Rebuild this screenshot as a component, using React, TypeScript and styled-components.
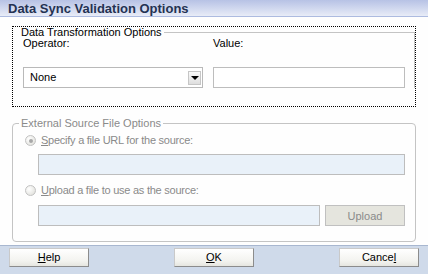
import styled, { createGlobalStyle } from "styled-components";

const GlobalStyle = createGlobalStyle`
  html, body {
    margin: 0;
    padding: 0;
    background: #ffffff;
  }
  body {
    font-family: "Liberation Sans", Tahoma, Arial, sans-serif;
    font-size: 11px;
    color: #000;
  }
`;

const Dialog = styled.div`
  width: 428px;
  height: 274px;
  display: flex;
  flex-direction: column;
  background: #fefefe;
  box-sizing: border-box;
`;

const TitleBar = styled.div`
  height: 16px;
  line-height: 17px;
  padding-left: 8px;
  border-bottom: 1px solid #adbbe0;
  background: linear-gradient(to bottom, #b7c2e5 0%, #d4dbf0 60%, #e8ecf7 100%);
  color: #243252;
  font-weight: bold;
  font-size: 13px;
  white-space: nowrap;
`;

const Body = styled.div`
  flex: 1;
  padding: 9px 12px 0 12px;
  display: flex;
  flex-direction: column;
`;

const DottedBox = styled.div`
  height: 81px;
  box-sizing: border-box;
  border: 1px dotted #000;
`;

const Group = styled.fieldset<{ $open?: boolean }>`
  margin: ${({ $open }) => ($open ? "0 0 0 6px" : "11px 0 0 0")};
  padding: ${({ $open }) => ($open ? "0" : "0 0 15px 6px")};
  border: 1px solid #c4c4c4;
  border-radius: 4px;
  min-width: 0;
  ${({ $open }) =>
    $open &&
    `
    border-left: none;
    border-bottom: none;
    border-radius: 0;
  `}
`;

const Legend = styled.legend<{ $disabled?: boolean }>`
  padding: 0 2px;
  line-height: 11px;
  color: ${({ $disabled }) => ($disabled ? "#8a8a8a" : "#000")};
`;

const FieldGrid = styled.div`
  display: grid;
  grid-template-columns: 180px 192px;
  column-gap: 10px;
  row-gap: 18px;
  margin: 0 0 0 4px;
  line-height: 11px;
`;

const FieldLabel = styled.label`
  display: block;
`;

const Select = styled.div`
  height: 21px;
  box-sizing: border-box;
  border: 1px solid #b9b9b9;
  background: #fff;
  display: flex;
  align-items: center;
  justify-content: space-between;
  padding: 0 1px 0 6px;
`;

const DropButton = styled.span`
  width: 13px;
  height: 14px;
  box-sizing: border-box;
  border: 1px solid #c6c6c6;
  background: linear-gradient(to bottom, #fafafa, #dedede);
  display: flex;
  align-items: center;
  justify-content: center;
  &::after {
    content: "";
    border-left: 4px solid transparent;
    border-right: 4px solid transparent;
    border-top: 4px solid #000;
  }
`;

const TextInput = styled.div<{ $disabled?: boolean }>`
  height: 21px;
  box-sizing: border-box;
  border: 1px solid #bdbdbd;
  background: ${({ $disabled }) => ($disabled ? "#e9f1f9" : "#fff")};
`;

const RadioRow = styled.div<{ $top: number }>`
  display: flex;
  align-items: center;
  gap: 5px;
  margin: ${({ $top }) => $top}px 0 0 6px;
  line-height: 13px;
  color: #8a8a8a;
  letter-spacing: -0.25px;
`;

const Radio = styled.span<{ $checked?: boolean }>`
  width: 9px;
  height: 9px;
  border-radius: 50%;
  border: 1px solid #c2c2c2;
  background: radial-gradient(circle at 35% 35%, #ffffff, #dcdcd6);
  display: flex;
  align-items: center;
  justify-content: center;
  &::after {
    content: "";
    display: ${({ $checked }) => ($checked ? "block" : "none")};
    width: 4px;
    height: 4px;
    border-radius: 50%;
    background: #a8a8a8;
  }
`;

const InputRow = styled.div<{ $top: number }>`
  display: flex;
  gap: 5px;
  margin: ${({ $top }) => $top}px 10px 0 19px;
  > div {
    flex: 1;
  }
`;

const UploadButton = styled.span`
  width: 80px;
  height: 21px;
  box-sizing: border-box;
  border: 1px solid #c0c0c0;
  background: #e5e5de;
  color: #8a8a8a;
  display: flex;
  align-items: center;
  justify-content: center;
`;

const Footer = styled.div`
  height: 26px;
  border-top: 1px solid #a8b7d0;
  background: #cfdaea;
  display: flex;
  align-items: flex-start;
  padding: 2px 9px 0 9px;
`;

const Button = styled.button<{ $push?: boolean }>`
  width: 80px;
  height: 19px;
  margin-left: ${({ $push }) => ($push ? "auto" : "0")};
  & + & {
    margin-left: ${({ $push }) => ($push ? "auto" : "23px")};
  }
  padding: 0;
  box-sizing: border-box;
  border: 1px solid;
  border-color: #c9c9c9 #8c8c8c #8c8c8c #c9c9c9;
  background: linear-gradient(to bottom, #ffffff, #f3f3ef 70%, #e6e6e0);
  font-family: "Liberation Sans", Tahoma, Arial, sans-serif;
  font-size: 11px;
  color: #000;
  line-height: 17px;
`;

export default function App() {
  return (
    <>
      <GlobalStyle />
      <Dialog>
        <TitleBar>Data Sync Validation Options</TitleBar>
        <Body>
          <DottedBox>
            <Group $open>
              <Legend>Data Transformation Options</Legend>
              <FieldGrid>
                <FieldLabel>Operator:</FieldLabel>
                <FieldLabel>Value:</FieldLabel>
                <Select>
                  <span>None</span>
                  <DropButton />
                </Select>
                <TextInput />
              </FieldGrid>
            </Group>
          </DottedBox>
          <Group>
            <Legend $disabled>External Source File Options</Legend>
            <RadioRow $top={5}>
              <Radio $checked />
              <span>
                <u>S</u>pecify a file URL for the source:
              </span>
            </RadioRow>
            <InputRow $top={7}>
              <TextInput $disabled />
            </InputRow>
            <RadioRow $top={9}>
              <Radio />
              <span>
                <u>U</u>pload a file to use as the source:
              </span>
            </RadioRow>
            <InputRow $top={8}>
              <TextInput $disabled />
              <UploadButton>Upload</UploadButton>
            </InputRow>
          </Group>
        </Body>
        <Footer>
          <Button>
            <u>H</u>elp
          </Button>
          <Button $push>
            <u>O</u>K
          </Button>
          <Button>
            Cance<u>l</u>
          </Button>
        </Footer>
      </Dialog>
    </>
  );
}
